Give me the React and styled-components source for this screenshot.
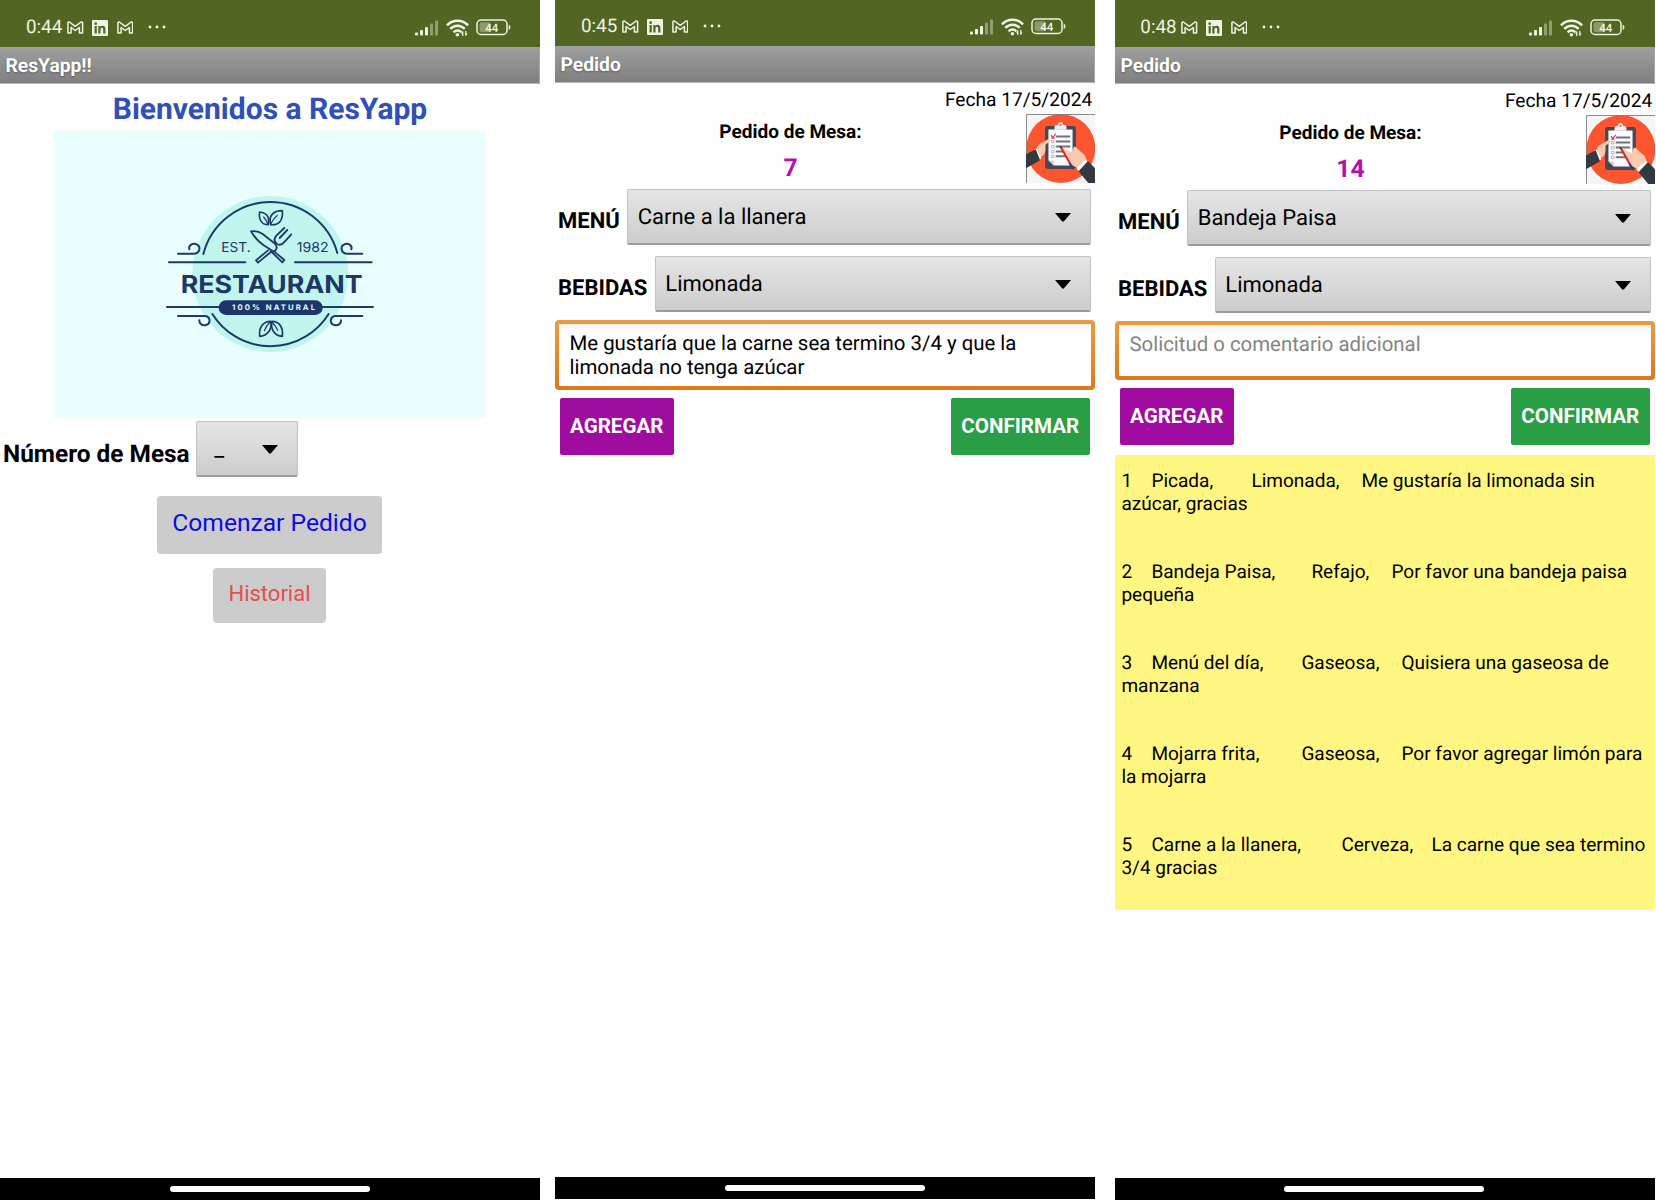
import React from "react";
import styled, { createGlobalStyle } from "styled-components";

const GlobalStyle = createGlobalStyle`
  body { margin: 0; background: #fefefe; overflow: hidden; }
  * { box-sizing: border-box; }
  body, button { font-family: Roboto, "Liberation Sans", sans-serif; }
`;

const Board = styled.main`
  display: flex;
  width: 1656px;
  height: 1200px;
  overflow: hidden;
  color: #000;
  text-rendering: geometricPrecision;
`;

const PhoneFrame = styled.section`
  display: flex;
  flex-direction: column;
  flex: none;
  width: 540px;
  height: 1200px;
  margin-left: ${(p) => p.$gap || 0}px;
  margin-top: ${(p) => p.$lift || 0}px;
  background: #fefefe;
`;

const StatusBar = styled.header`
  display: flex;
  align-items: center;
  height: 47px;
  padding: 8px ${(p) => 29 + p.$shift * 0.8}px 0 ${(p) => 26 - p.$shift * 0.5}px;
  background: #526623;
  color: #eff3e2;
`;

const Clock = styled.span`
  width: 41px;
  padding-bottom: 1px;
  font-size: 18.8px;
  line-height: 22px;
  white-space: nowrap;
`;

const Notices = styled.div`
  display: flex;
  align-items: center;
  gap: 8.5px;
  flex: 1;
`;

const Indicators = styled.div`
  display: flex;
  align-items: center;
  gap: 7px;
`;

const TitleBar = styled.div`
  height: 36.5px;
  padding: 1px 6px 0 5.5px;
  background: linear-gradient(#9f9f9f, #7f7f7f);
  border-bottom: 1px solid #b5b5b5;
  border-right: 1px solid #a8a8a8;
  color: #fff;
  font-size: 19.25px;
  font-weight: 700;
  line-height: 35.5px;
  text-shadow: 0 1px 2px rgba(0, 0, 0, 0.35);
`;

const Content = styled.div`
  display: flex;
  flex-direction: column;
  flex: 1;
`;

const HomeBar = styled.footer`
  display: flex;
  justify-content: center;
  height: 22px;
  padding: 8px ${(p) => p.$shift * 1.5}px 0 0;
  background: #000;
`;

const HomePill = styled.span`
  width: 200px;
  height: 6px;
  border-radius: 3px;
  background: #fcfcfc;
`;

const Welcome = styled.h1`
  height: 47.5px;
  margin: 0;
  padding-top: 3px;
  color: #2f4fb9;
  font-size: 30px;
  font-weight: 700;
  line-height: 46px;
  text-align: center;
`;

const Banner = styled.svg`
  display: block;
  width: 432px;
  height: 286.5px;
  margin: 0 auto;
  background: #e8fffe;
`;

const FieldRow = styled.div`
  display: flex;
  align-items: center;
  height: 56px;
  margin-top: ${(p) => p.$top}px;
  padding: 0 4px 0 3px;
`;

const FieldLabel = styled.label`
  padding-top: 9px;
  margin-right: ${(p) => p.$gap}px;
  font-size: ${(p) => p.$size}px;
  font-weight: 700;
  white-space: nowrap;
`;

const SelectBox = styled.div`
  display: flex;
  align-items: center;
  justify-content: space-between;
  flex: ${(p) => (p.$width ? "none" : 1)};
  width: ${(p) => (p.$width ? p.$width + "px" : "auto")};
  height: 56px;
  padding: 2px 19.5px 0 ${(p) => p.$inset || 9.5}px;
  border: solid #c2c2c2;
  border-width: 1px 1px 2px;
  border-bottom-color: #9b9b9b;
  border-radius: 2px;
  background: linear-gradient(#e5e5e5, #cdcdcd);
  font-size: 22px;
`;

const Arrow = styled.svg`
  width: 16px;
  height: 9px;
`;

const SoftButton = styled.button`
  align-self: center;
  width: ${(p) => p.$width}px;
  height: ${(p) => p.$height}px;
  margin: ${(p) => p.$top}px 1px 0 0;
  padding: 0 0 ${(p) => p.$drop}px;
  border: 0;
  border-radius: 4px;
  background: #ccc;
  color: ${(p) => p.$color};
  font-size: ${(p) => p.$size}px;
  white-space: nowrap;
`;

const DateLine = styled.div`
  height: 31.5px;
  padding: 2px 2.75px 0 0;
  font-size: 19.15px;
  line-height: 29px;
  text-align: right;
`;

const OrderHeader = styled.div`
  display: flex;
  height: 69px;
`;

const TableInfo = styled.div`
  flex: 1;
  padding-top: 1px;
  text-align: center;
  font-weight: 700;
`;

const TableCaption = styled.div`
  font-size: 19.05px;
  line-height: 34px;
`;

const TableNumber = styled.div`
  padding-top: 2px;
  color: #b30fb3;
  font-size: 24.75px;
  line-height: 35px;
`;

const OrderPicture = styled.svg`
  width: 69px;
  height: 69px;
`;

const Comment = styled.div`
  height: ${(p) => p.$height}px;
  margin-top: 8.5px;
  padding: 7px 10px 0 10.5px;
  border: 4px solid transparent;
  border-radius: 4px;
  background:
    linear-gradient(#f3f3f3, #fefefe 8px) padding-box,
    linear-gradient(#eb9c40, #dc7a1c) border-box;
  color: ${(p) => (p.$empty ? "#858585" : "#000")};
  font-size: 20.4px;
  line-height: 24px;
`;

const Actions = styled.div`
  display: flex;
  justify-content: space-between;
  margin: 8.5px 5.5px 0 5px;
`;

const ActionButton = styled.button`
  width: ${(p) => p.$width}px;
  height: 56.5px;
  padding: 0;
  border: 0;
  border-radius: 2px;
  background: ${(p) => p.$color};
  color: #fff;
  font-size: 20.6px;
  font-weight: 700;
`;

const OrderList = styled.ol`
  margin: 10px 0 0;
  padding: 0;
  list-style: none;
  background: #fff781;
`;

const OrderItem = styled.li`
  height: 91px;
  padding: 15.5px 0 0 6.4px;
  font-size: 19.05px;
  line-height: 22.6px;
  white-space: pre;
  tab-size: 10px;
`;

function MailIcon() {
  return (
    <svg width="16.5" height="13" viewBox="0 0 16.5 13" fill="none" stroke="#eff3e2" strokeWidth="1.5" strokeLinejoin="round">
      <path d="M.9 12.100V2Q1 .6 2.400 1L8.250 5.300 14.100 1q1.400-.400 1.500 1v10.100h-3.200V6.500L8.250 9.500 4.100 6.500v5.600Z" />
    </svg>
  );
}

function LinkedInIcon() {
  return (
    <svg width="16" height="16" viewBox="0 0 16 16">
      <rect width="16" height="16" rx="1" fill="#eff3e2" />
      <g fill="#526623">
        <circle cx="3.7" cy="3.7" r="1.35" />
        <rect x="2.6" y="6" width="2.2" height="7.4" />
        <path d="M6.3 6h2.1v1c.5-.8 1.300-1.200 2.300-1.200 2 0 2.700 1.300 2.700 3.300v4.300h-2.200V9.500c0-1.100-.300-1.800-1.200-1.800-1 0-1.500.700-1.500 1.800v3.900H6.300Z" />
      </g>
    </svg>
  );
}

const DotsMark = styled.svg`
  width: 18px;
  height: 4px;
  margin: 0 0 2px 6px;
`;

function DotsIcon() {
  return (
    <DotsMark viewBox="0 0 18 4" fill="#eff3e2">
      <circle cx="2" cy="2" r="1.4" />
      <circle cx="9" cy="2" r="1.4" />
      <circle cx="16" cy="2" r="1.4" />
    </DotsMark>
  );
}

function SignalIcon() {
  return (
    <svg width="24" height="16" viewBox="0 0 24 16" fill="#eff3e2">
      <rect x="0" y="12.500" width="3" height="3" rx=".8" />
      <rect x="5" y="10" width="3" height="5.500" rx=".8" />
      <rect x="10" y="7" width="3" height="8.500" rx=".8" />
      <rect x="15" y="3.500" width="3" height="12" rx=".8" opacity=".4" />
      <rect x="20" y="0.500" width="3" height="15" rx=".8" opacity=".4" />
    </svg>
  );
}

function WifiIcon() {
  return (
    <svg width="23" height="18" viewBox="0 0 23 18" fill="none" stroke="#eff3e2">
      <g strokeWidth="2.500">
        <path d="M.900 6.300C6.800.100 16.200.100 22.100 6.300" />
        <path d="M4.300 9.900c4-4.300 10.400-4.300 14.400 0" />
        <path d="M7.600 13.300c2.300-2.400 5.500-2.400 7.800 0" />
      </g>
      <circle cx="11.400" cy="15.700" r="1.800" fill="#eff3e2" stroke="none" />
      <path d="M16.700 12.500v4.500M19.800 12v4.500" strokeWidth="1.300" />
      <path d="M15 14.800l1.700-2.600v2.600ZM21.500 14.500l-1.700 2.600v-2.600Z" fill="#eff3e2" stroke="none" />
    </svg>
  );
}

function BatteryIcon() {
  return (
    <svg width="35" height="17" viewBox="0 0 35 17">
      <rect x="1" y="1" width="30" height="14.500" rx="4" fill="none" stroke="#eff3e2" strokeWidth="1.500" />
      <rect x="3.500" y="3.300" width="11" height="10" rx="2" fill="#eff3e2" opacity=".38" />
      <path d="M32.700 5.800q1.700 0 1.700 2.500t-1.700 2.500Z" fill="#eff3e2" />
      <text x="15.800" y="12.500" fill="#eff3e2" fontSize="11.500" fontWeight="500" textAnchor="middle" fontFamily="Roboto, sans-serif">44</text>
    </svg>
  );
}

function Phone({ time, title, gap, lift, shift = 0, children }) {
  return (
    <PhoneFrame $gap={gap} $lift={lift}>
      <StatusBar $shift={shift}>
        <Clock>{time}</Clock>
        <Notices>
          <MailIcon />
          <LinkedInIcon />
          <MailIcon />
          <DotsIcon />
        </Notices>
        <Indicators>
          <SignalIcon />
          <WifiIcon />
          <BatteryIcon />
        </Indicators>
      </StatusBar>
      <TitleBar>{title}</TitleBar>
      <Content>{children}</Content>
      <HomeBar $shift={shift}>
        <HomePill />
      </HomeBar>
    </PhoneFrame>
  );
}

function Select({ value, width, inset }) {
  return (
    <SelectBox $width={width} $inset={inset}>
      <span>{value}</span>
      <Arrow viewBox="0 0 16 9">
        <path d="M0 0h16L9 8.300q-1 .900-2 0Z" />
      </Arrow>
    </SelectBox>
  );
}

function RestaurantLogo() {
  return (
    <Banner viewBox="0 0 432 286.5">
      <g transform="translate(96 49) scale(.33333)" fill="none" stroke="#1e3a68" strokeWidth="6" strokeLinecap="round" strokeLinejoin="round">
        <circle cx="361" cy="282" r="234" fill="#c0f6ee" stroke="none" />
        <path d="M160 222A208 208 0 0 1 562 219" />
        <path d="M187 402A206 206 0 0 0 536 402" />
        <path d="M57 247H286M435 247H665M51 381H206M516 381H669" />
        <path d="M84 221H133C150 220 153 200 141 194 129 187 114 196 118 208" />
        <path d="M637 221H590C573 220 570 200 582 194 594 187 608 196 604 208" />
        <path d="M84 408H165C182 410 183 431 168 435 156 438 147 430 148 421" />
        <path d="M637 408H556C539 410 538 431 553 435 565 438 574 430 573 421" />
        <g strokeWidth="5">
          <path d="M362 134c-8-26 8-42 35-42 3 26-8 44-35 42Z" />
          <path d="M354 134c6-20-2-36-25-38-4 22 6 38 25 38Z" />
          <path d="M362 134c4-12 10-20 20-28M354 134c-3-10-7-16-13-23" strokeWidth="3.500" />
        </g>
        <g strokeWidth="5">
          <path d="M366 424c24 0 34 20 31 45-24-2-36-22-31-45Z" />
          <path d="M362 424c-24 0-36 20-33 45 24-2 38-22 33-45Z" />
          <path d="M366 426c8 8 13 16 17 25M360 426c-8 8-13 16-17 26" strokeWidth="3.500" />
        </g>
        <g strokeWidth="5.500">
          <path d="M303 154Q322 151 338 162L376 192Q384 202 376 212L369 214 340 195Q318 180 303 154Z" />
          <path d="M373 215L403 240L397 247L362 213" />
          <path d="M403 144L379 167Q368 179 379 190 391 200 402 187L424 163M412 150L389 174" />
          <path d="M354 211L318 241L324 248L366 213" />
        </g>
        <rect x="206" y="361" width="312" height="44" rx="22" fill="#1d356d" stroke="none" />
        <g stroke="none" fill="#1e3767" fontFamily="Inter, sans-serif">
          <text x="214" y="216" fontSize="41" textLength="88" lengthAdjust="spacingAndGlyphs">EST.</text>
          <text x="440" y="216" fontSize="41" textLength="96" lengthAdjust="spacingAndGlyphs">1982</text>
          <text x="92" y="340" fontSize="74" fontWeight="700" textLength="546" lengthAdjust="spacingAndGlyphs">RESTAURANT</text>
          <text x="246" y="391" fontSize="23" fontWeight="700" fill="#e6fffb" textLength="249">100% NATURAL</text>
        </g>
      </g>
    </Banner>
  );
}

function ClipboardPicture() {
  return (
    <OrderPicture viewBox="49 28 206 206">
      <rect x="49" y="28" width="206" height="206" fill="#f5f5f7" />
      <circle cx="153" cy="131" r="103" fill="#fc5530" />
      <path d="M50.500 234V29.500H255" fill="none" stroke="#777" strokeWidth="2.500" />
      <rect x="106" y="64" width="92" height="128" rx="7" fill="#454957" />
      <path d="M116 74h72v108h-56l-16-16Z" fill="#fbfbfd" />
      <path d="M116 166l16 16v-14Z" fill="#cfd2da" />
      <path d="M134 75v-9q2-6 10-6 1-8 8-8t8 8q9 0 10 6v9Z" fill="#f0eef0" />
      <circle cx="152" cy="61" r="3" fill="#fc5530" />
      <g stroke="#70737a" strokeWidth="6">
        <path d="M138 95h43M138 110h43M138 125h43M138 140h32M138 154h28" />
      </g>
      <g fill="none" stroke="#9a9da5" strokeWidth="2">
        <path d="M125 107h8v7h-8ZM125 122h8v7h-8ZM125 137h8v7h-8ZM125 151h8v7h-8Z" />
      </g>
      <path d="M124 91l5 8 9-12M125 100h9" fill="none" stroke="#df3150" strokeWidth="3.500" />
      <path d="M79 135Q84 119 98 113L116 103q8-1 5 6l-14 11q2 27-8 33l-14 8Z" fill="#f8cbb0" />
      <path d="M73 134l8-2 14 29-9 5Z" fill="#fff" />
      <path d="M49 148L78 133 91 166 49 190Z" fill="#333941" />
      <path d="M156 131q5-5 12 3l17 8 7-16q7-2 9 4l22 20q8 12 6 20l-21 22q-22-9-28-23l-23-32Z" fill="#f8cbb0" />
      <path d="M153 127l30 53" stroke="#d62232" strokeWidth="6" />
      <path d="M179 174l11 18" stroke="#293f70" strokeWidth="6" />
      <path d="M149 121l2 10 6-4Z" fill="#443" />
      <path d="M177 147l9 6M175 156l9 5M178 165l8 4" stroke="#dfa78f" strokeWidth="1.500" />
      <path d="M200 191l27-27 8 8-27 28Z" fill="#fff" />
      <path d="M206 199l28-31 21 22v44h-20Z" fill="#333941" />
    </OrderPicture>
  );
}

function OrderScreen({ table, menu, comment, placeholder, commentHeight, children, ...phone }) {
  return (
    <Phone title="Pedido" {...phone}>
      <DateLine>Fecha 17/5/2024</DateLine>
      <OrderHeader>
        <TableInfo>
          <TableCaption>Pedido de Mesa:</TableCaption>
          <TableNumber>{table}</TableNumber>
        </TableInfo>
        <ClipboardPicture />
      </OrderHeader>
      <FieldRow $top={5.5}>
        <FieldLabel $size={22} $gap={7.5}>MENÚ</FieldLabel>
        <Select value={menu} />
      </FieldRow>
      <FieldRow $top={11}>
        <FieldLabel $size={22} $gap={7.5}>BEBIDAS</FieldLabel>
        <Select value="Limonada" />
      </FieldRow>
      <Comment $height={commentHeight} $empty={!comment}>{comment || placeholder}</Comment>
      <Actions>
        <ActionButton $width={113.5} $color="#9f0c9f">AGREGAR</ActionButton>
        <ActionButton $width={138.5} $color="#2a9e45">CONFIRMAR</ActionButton>
      </Actions>
      {children}
    </Phone>
  );
}

const orders = [
  "1\t\tPicada,\t\t\t\tLimonada, \t\tMe gustaría la limonada sin\nazúcar, gracias",
  "2\t\tBandeja Paisa,\t\t\t\tRefajo, \t\tPor favor una bandeja paisa\npequeña",
  "3\t\tMenú del día, \t\t\t\tGaseosa, \t\tQuisiera una gaseosa de\nmanzana",
  "4\t\tMojarra frita, \t\t\t\tGaseosa, \t\tPor favor agregar limón para\nla mojarra",
  "5\t\tCarne a la llanera, \t\t\t\tCerveza,\t\tLa carne que sea termino\n3/4 gracias",
];

export default function App() {
  return (
    <>
      <GlobalStyle />
      <Board>
        <Phone time="0:44" title="ResYapp!!">
          <Welcome>Bienvenidos a ResYapp</Welcome>
          <RestaurantLogo />
          <FieldRow $top={3.5}>
            <FieldLabel $size={24.4} $gap={6.5}>Número de Mesa</FieldLabel>
            <Select value="_" width={102} inset={17} />
          </FieldRow>
          <SoftButton $width={225} $height={58} $top={19} $drop={4.5} $size={24.6} $color="#0a0ae6">
            Comenzar Pedido
          </SoftButton>
          <SoftButton $width={113} $height={54.5} $top={14} $drop={4} $size={22} $color="#e34e4e">
            Historial
          </SoftButton>
        </Phone>
        <OrderScreen
          time="0:45"
          gap={15}
          lift={-1}
          table="7"
          menu="Carne a la llanera"
          comment="Me gustaría que la carne sea termino 3/4 y que la limonada no tenga azúcar"
          commentHeight={69.5}
        />
        <OrderScreen
          time="0:48"
          gap={20}
          shift={1.3}
          table="14"
          menu="Bandeja Paisa"
          placeholder="Solicitud o comentario adicional"
          commentHeight={58.5}
        >
          <OrderList>
            {orders.map((order) => (
              <OrderItem key={order}>{order}</OrderItem>
            ))}
          </OrderList>
        </OrderScreen>
      </Board>
    </>
  );
}
